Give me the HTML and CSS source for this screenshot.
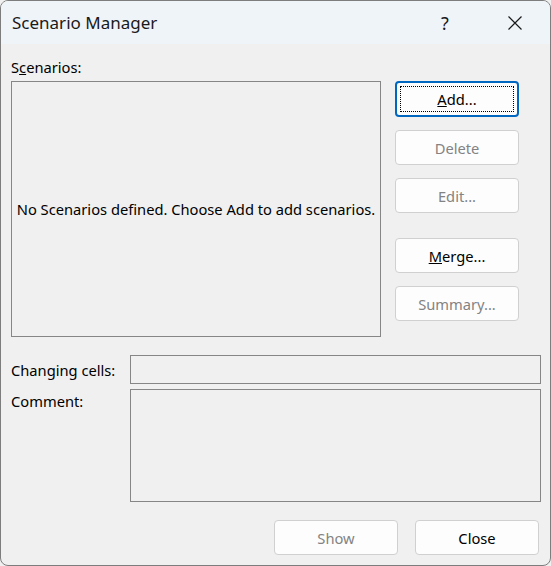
FILE: index.html
```html
<!DOCTYPE html>
<html>
<head>
<meta charset="utf-8">
<title>Scenario Manager</title>
<link rel="stylesheet" href="styles.css">
</head>
<body>
<div class="window">
  <div class="titlebar">
    <div class="title">Scenario Manager</div>
    <div class="caption-btn help">?</div>
    <div class="caption-btn close">
      <svg width="14" height="14" viewBox="0 0 14 14"><path d="M0.5 0.5 L13.5 13.5 M13.5 0.5 L0.5 13.5" stroke="#1a1a1a" stroke-width="1.2" fill="none"/></svg>
    </div>
  </div>
  <div class="content">
    <div class="label top-label">S<u>c</u>enarios:</div>
    <div class="main-row">
      <div class="listbox">No Scenarios defined. Choose Add to add scenarios.</div>
      <div class="side-buttons">
        <div class="btn default"><span><u>A</u>dd...</span></div>
        <div class="btn disabled">Delete</div>
        <div class="btn disabled">Edit...</div>
        <div class="btn spaced"><span><u>M</u>erge...</span></div>
        <div class="btn disabled">Summary...</div>
      </div>
    </div>
    <div class="field-row cells-row">
      <div class="field-label">Changing cells:</div>
      <div class="input"></div>
    </div>
    <div class="field-row comment-row">
      <div class="field-label">Comment:</div>
      <div class="textarea"></div>
    </div>
    <div class="bottom-buttons">
      <div class="btn disabled">Show</div>
      <div class="btn">Close</div>
    </div>
  </div>
</div>
</body>
</html>
```
FILE: styles.css
```css
html, body {
  margin: 0;
  padding: 0;
  background: #f0f0f0;
}
body {
  font-family: "Noto Sans", "Open Sans", sans-serif;
  font-size: 14.7px;
  color: #000;
}
.window {
  width: 551px;
  height: 566px;
  box-sizing: border-box;
  border: 1px solid #7d7d7d;
  border-radius: 8px;
  overflow: hidden;
  background: #f0f0f0;
  display: flex;
  flex-direction: column;
}
.titlebar {
  height: 43px;
  flex: none;
  background: #eff4f9;
  display: flex;
  align-items: center;
  padding-left: 11px;
}
.title {
  font-size: 17px;
  flex: 1;
  color: #1a1a1a;
}
.caption-btn {
  width: 46px;
  height: 43px;
  display: flex;
  align-items: center;
  justify-content: center;
  font-size: 18px;
  color: #1a1a1a;
}
.help {
  margin-right: 24px;
}
.close {
  margin-right: 12px;
}
.content {
  flex: 1;
  display: flex;
  flex-direction: column;
  padding: 13px 9px 0 10px;
}
.label {
  height: 20px;
  line-height: 20px;
}
.top-label {
  margin-bottom: 4px;
}
.main-row {
  display: flex;
}
.listbox {
  width: 370px;
  height: 256px;
  box-sizing: border-box;
  border: 1px solid #868686;
  display: flex;
  align-items: center;
  justify-content: center;
  background: #f0f0f0;
}
.side-buttons {
  margin-left: 14px;
  display: flex;
  flex-direction: column;
  gap: 13px;
}
.btn {
  width: 124px;
  height: 35px;
  box-sizing: border-box;
  border: 1px solid #d0d0d0;
  border-radius: 4px;
  background: #fdfdfd;
  display: flex;
  align-items: center;
  justify-content: center;
  color: #000;
}
.btn.disabled {
  color: #838383;
}
.btn.default {
  height: 36px;
  border: 2px solid #0067c0;
  outline: 1px dotted #000;
  outline-offset: -6px;
}
.btn.spaced {
  margin-top: 12px;
}
.field-row {
  display: flex;
}
.field-label {
  width: 119px;
  flex: none;
}
.cells-row {
  margin-top: 18px;
  align-items: center;
}
.input {
  width: 411px;
  height: 29px;
  box-sizing: border-box;
  border: 1px solid #868686;
}
.comment-row {
  margin-top: 5px;
}
.comment-row .field-label {
  padding-top: 2px;
}
.textarea {
  width: 411px;
  height: 113px;
  box-sizing: border-box;
  border: 1px solid #868686;
}
.bottom-buttons {
  margin-top: 18px;
  display: flex;
  justify-content: flex-end;
  gap: 17px;
  padding-right: 2px;
}
```
